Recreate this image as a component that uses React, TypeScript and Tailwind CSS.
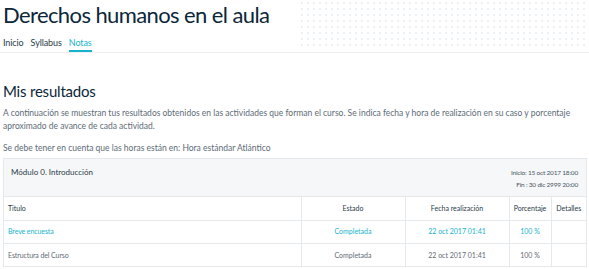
import React from 'react';

type Row = {
  titulo: string;
  estado: string;
  fecha: string;
  porcentaje: string;
  highlight?: boolean;
};

const rows: Row[] = [
  { titulo: 'Breve encuesta', estado: 'Completada', fecha: '22 oct 2017 01:41', porcentaje: '100 %', highlight: true },
  { titulo: 'Estructura del Curso', estado: 'Completada', fecha: '22 oct 2017 01:41', porcentaje: '100 %' },
];

const tabs = ['Inicio', 'Syllabus', 'Notas'];

const App: React.FC = () => {
  return (
    <div className="w-[589px] h-[269px] overflow-hidden bg-white font-['Lato',sans-serif] text-[#5d6b76]">
      {/* Header */}
      <div className="flex border-b border-[#eceff2]">
        <div className="pl-[3px]">
          <h1 className="h-[35px] text-[22px] leading-[30px] tracking-[-0.6px] text-[#0b2739] whitespace-nowrap">
            Derechos humanos en el aula
          </h1>
          <nav className="flex gap-[7px] h-[17px]">
            {tabs.map((t) => (
              <span
                key={t}
                className={
                  t === 'Notas'
                    ? 'text-[9px] leading-[15px] tracking-[-0.1px] text-[#17b3cc] border-b-2 border-[#17b3cc]'
                    : 'text-[9px] leading-[15px] tracking-[-0.1px] text-[#2b3d4a]'
                }
              >
                {t}
              </span>
            ))}
          </nav>
        </div>
        <div className="flex-1 ml-[30px] mb-[3px] bg-[radial-gradient(#eef1f4_1px,transparent_1.2px)] bg-[length:6px_6px]"></div>
      </div>

      {/* Content */}
      <div className="px-[3px]">
        <h2 className="mt-[28px] text-[15px] leading-[20px] tracking-[-0.2px] text-[#0b2739]">Mis resultados</h2>
        <p className="mt-[6px] text-[8.5px] leading-[13px]">
          A continuación se muestran tus resultados obtenidos en las actividades que forman el curso. Se indica fecha y hora de realización en su caso y porcentaje aproximado de avance de cada actividad.
        </p>
        <p className="mt-[9px] text-[8.5px] leading-[13px]">
          Se debe tener en cuenta que las horas están en: Hora estándar Atlántico
        </p>

        <div className="mt-[3px] w-[584px] border border-[#e6e9ec]">
          <div className="flex justify-between h-[38px] bg-[#f6f7f9] border-b border-[#e6e9ec]">
            <div className="pl-[7px] pt-[7px] text-[8px] leading-[12px] text-[#2a3a47]">Módulo 0. Introducción</div>
            <div className="pr-[8px] pt-[8px] text-right text-[6.5px] leading-[12px] tracking-[-0.2px] text-[#4a5863]">
              <div>Inicio: 15 oct 2017 18:00</div>
              <div>Fin : 30 dic 2999 20:00</div>
            </div>
          </div>
          <table className="w-full border-collapse table-fixed text-[7px]">
            <colgroup>
              <col className="w-[297px]" />
              <col className="w-[104px]" />
              <col className="w-[104px]" />
              <col className="w-[42px]" />
              <col />
            </colgroup>
            <thead>
              <tr className="h-[23px] text-[#2a3a47]">
                <th className="font-normal text-left pl-[4px] border-r border-[#e6e9ec]">Titulo</th>
                <th className="font-normal border-r border-[#e6e9ec]">Estado</th>
                <th className="font-normal border-r border-[#e6e9ec]">Fecha realización</th>
                <th className="font-normal border-r border-[#e6e9ec]">Porcentaje</th>
                <th className="font-normal">Detalles</th>
              </tr>
            </thead>
            <tbody>
              {rows.map((r) => (
                <tr
                  key={r.titulo}
                  className={r.highlight ? 'h-[23px] border-t border-[#e6e9ec] text-[#17b3cc]' : 'h-[23px] border-t border-[#e6e9ec] text-[#5f6b74]'}
                >
                  <td className="pl-[4px] border-r border-[#e6e9ec] tracking-[-0.1px]">{r.titulo}</td>
                  <td className="text-center border-r border-[#e6e9ec]">{r.estado}</td>
                  <td className="text-center border-r border-[#e6e9ec]">{r.fecha}</td>
                  <td className="text-center border-r border-[#e6e9ec]">{r.porcentaje}</td>
                  <td></td>
                </tr>
              ))}
            </tbody>
          </table>
        </div>
      </div>
    </div>
  );
};

export default App;
